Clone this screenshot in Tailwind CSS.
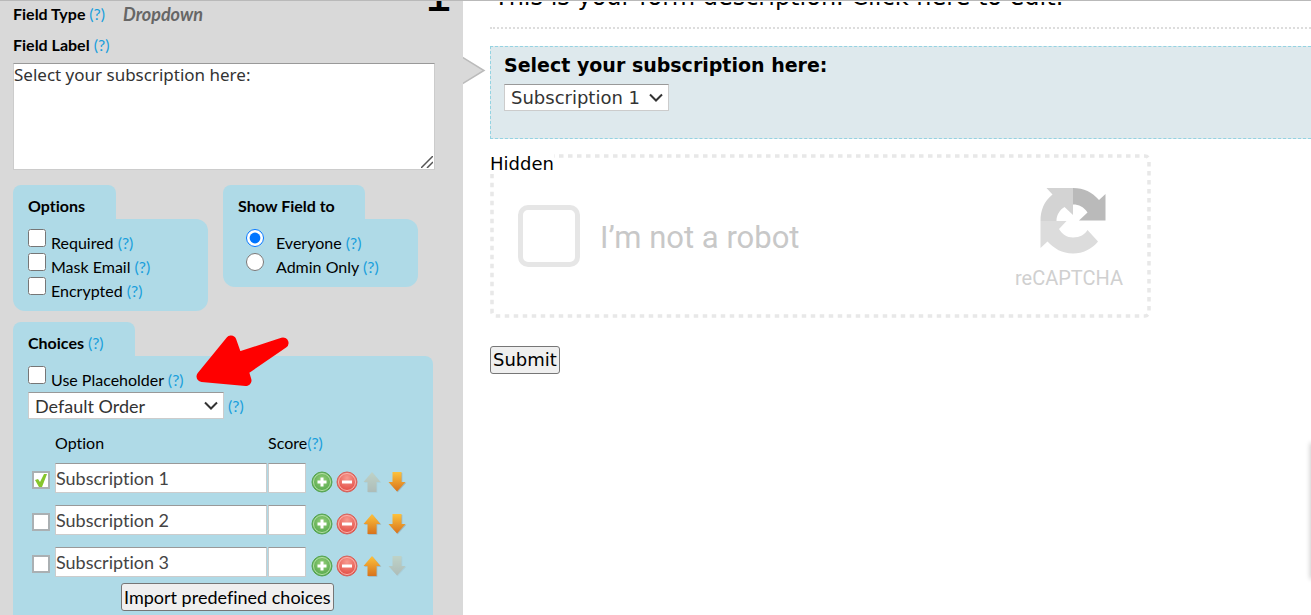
<!DOCTYPE html>
<html lang="en">
<head>
  <meta charset="UTF-8" />
  <meta name="viewport" content="width=device-width, initial-scale=1.0"/>
  <title>Form Editor</title>
  <script src="https://cdn.jsdelivr.net/npm/@tailwindcss/browser@4"></script>
</head>
<body class="bg-white text-black h-screen overflow-hidden flex border-t border-[#b9b9b9]">

  <!-- icons shared by the choice rows -->
  <svg class="absolute w-0 h-0" aria-hidden="true">
    <defs>
      <radialGradient id="green" cx=".5" cy=".4" r=".6"><stop offset="0" stop-color="#98d07c"/><stop offset="1" stop-color="#4fa548"/></radialGradient>
      <radialGradient id="red" cx=".5" cy=".3" r=".7"><stop offset="0" stop-color="#f79a90"/><stop offset="1" stop-color="#e2473f"/></radialGradient>
      <linearGradient id="orange" x1="0" y1="0" x2="0" y2="1"><stop offset="0" stop-color="#fdc23c"/><stop offset="1" stop-color="#d8731c"/></linearGradient>
      <symbol id="add" viewBox="0 0 22 22">
        <circle cx="11" cy="11" r="10" fill="url(#green)" stroke="#56a450"/>
        <circle cx="11" cy="11" r="8.5" fill="none" stroke="#b5dfa5"/>
        <path d="M11 6.500v9M6.500 11h9" stroke="#fff" stroke-width="3"/>
      </symbol>
      <symbol id="remove" viewBox="0 0 22 22">
        <circle cx="11" cy="11" r="10" fill="url(#red)" stroke="#d6635c"/>
        <circle cx="11" cy="11" r="8.5" fill="none" stroke="#f9b5ae"/>
        <path d="M6 11h10" stroke="#fff" stroke-width="3"/>
      </symbol>
      <symbol id="up" viewBox="0 0 22 22">
        <path d="M11 1l8.500 10h-4v10h-9V11h-4z" fill="#777" opacity=".35" transform="translate(.8 .8)"/>
        <path d="M11 1l8.500 10h-4v10h-9V11h-4z" fill="url(#orange)"/>
      </symbol>
      <symbol id="down" viewBox="0 0 22 22">
        <path d="M6.500 1h9v10h4L11 20.500 2.500 11h4z" fill="#777" opacity=".35" transform="translate(.8 .8)"/>
        <path d="M6.500 1h9v10h4L11 20.500 2.500 11h4z" fill="url(#orange)"/>
      </symbol>
    </defs>
  </svg>

  <aside class="relative w-[463px] shrink-0 bg-[#d9d9d9] px-[13px] font-[Lato,sans-serif] text-[16px] leading-6 [font-variant-ligatures:none]">
    <div class="absolute top-0 right-2 h-4 w-8 overflow-hidden flex items-end font-['DejaVu_Sans',sans-serif] text-[48px] leading-[46px]">1</div>

    <div class="flex pt-px">
      <p class="font-bold">Field Type <a href="#" class="font-normal text-[#1a9fdc]">(?)</a></p>
      <span class="ml-[18px] text-[18px] font-bold italic text-[#666]">Dropdown</span>
    </div>
    <div class="mt-[7px]">
      <label for="fieldLabel" class="font-bold">Field Label</label> <a href="#" class="text-[#1a9fdc]">(?)</a>
    </div>
    <div class="relative mt-[6px] w-[422px]">
      <textarea id="fieldLabel" class="block resize-none w-full h-[107px] bg-white border border-[#ccc] border-t-[#999] font-['Noto_Sans',sans-serif] text-[17px] leading-[22px] text-[#333]">Select your subscription here:</textarea>
      <svg class="absolute right-[2px] bottom-[2px] w-3 h-3 pointer-events-none" viewBox="0 0 12 12" stroke="#555" stroke-width="1.500"><path d="M0 12L12 0M6 12l6-6"/></svg>
    </div>

    <div class="flex items-start mt-[15px] gap-[15px]">
      <section class="w-[195px]">
        <h2 class="w-[103px] h-[34px] rounded-t-lg bg-[#afdae7] pl-[15px] pt-[9px] font-bold">Options</h2>
        <div class="h-[92px] rounded-b-xl rounded-tr-xl bg-[#afdae7] pl-[15px] pt-[10px]">
          <div class="flex h-6 gap-[5px]">
            <input type="checkbox" id="required" class="size-[18px]"/>
            <label for="required" class="mt-[2px]">Required <a href="#" class="text-[#1a9fdc]">(?)</a></label>
          </div>
          <div class="flex h-6 gap-[5px]">
            <input type="checkbox" id="mask" class="size-[18px]"/>
            <label for="mask" class="mt-[2px]">Mask Email <a href="#" class="text-[#1a9fdc]">(?)</a></label>
          </div>
          <div class="flex h-6 gap-[5px]">
            <input type="checkbox" id="encrypted" class="size-[18px]"/>
            <label for="encrypted" class="mt-[2px]">Encrypted <a href="#" class="text-[#1a9fdc]">(?)</a></label>
          </div>
        </div>
      </section>

      <section class="w-[195px]">
        <h2 class="w-[142px] h-[34px] rounded-t-lg bg-[#afdae7] pl-[15px] pt-[9px] font-bold">Show Field to</h2>
        <div class="h-[68px] rounded-b-xl rounded-tr-xl bg-[#afdae7] pl-[23px] pt-[10px]">
          <div class="flex h-6 gap-3">
            <input type="radio" name="show" id="everyone" checked class="size-[18px]"/>
            <label for="everyone" class="mt-[2px]">Everyone <a href="#" class="text-[#1a9fdc]">(?)</a></label>
          </div>
          <div class="flex h-6 gap-3">
            <input type="radio" name="show" id="admin" class="size-[18px]"/>
            <label for="admin" class="mt-[2px]">Admin Only <a href="#" class="text-[#1a9fdc]">(?)</a></label>
          </div>
        </div>
      </section>
    </div>

    <section class="mt-[11px] w-[420px]">
      <h2 class="w-[122px] h-[34px] rounded-t-lg bg-[#afdae7] pl-[15px] pt-[9px] font-bold">Choices <a href="#" class="font-normal text-[#1a9fdc]">(?)</a></h2>
      <div class="rounded-tr-lg bg-[#afdae7] px-[15px] pt-[10px] pb-8">
        <div class="flex h-[26px] gap-[5px]">
          <input type="checkbox" id="placeholder" class="size-[18px]"/>
          <label for="placeholder" class="mt-[2px]">Use Placeholder <a href="#" class="text-[#1a9fdc]">(?)</a></label>
        </div>
        <div class="flex items-center gap-1">
          <div class="relative">
            <select aria-label="Order" class="block appearance-none w-[196px] h-[27px] bg-white border border-[#ccc] border-t-[#999] pl-[6px] text-[18px] leading-6 text-[#333]">
              <option>Default Order</option>
            </select>
            <svg class="absolute right-[6px] top-[9px] w-[14px] h-[10px] pointer-events-none" viewBox="0 0 14 10" fill="none" stroke="#333" stroke-width="2"><path d="M1 1.500l6 6 6-6"/></svg>
          </div>
          <a href="#" class="text-[#1a9fdc]">(?)</a>
        </div>

        <div class="flex mt-3 pl-[27px]">
          <span class="w-[213px]">Option</span>
          <span>Score<a href="#" class="text-[#1a9fdc]">(?)</a></span>
        </div>
        <div id="choices" class="mt-2 flex flex-col gap-3"></div>
        <button type="button" class="block ml-[93px] mt-[6px] h-7 px-[2px] bg-[#efefef] border border-[#767676] rounded-[3px] text-[18px] leading-6">Import predefined choices</button>
      </div>
    </section>

    <svg class="absolute left-[195px] top-[333px] w-[96px] h-[54px] pointer-events-none" viewBox="0 0 96 54">
      <path d="M7 42.500L36 7l6 17 46-15-40 27.500 3 10z" fill="#f00" stroke="#f00" stroke-width="11" stroke-linejoin="round"/>
    </svg>
  </aside>

  <main class="relative flex-1 min-w-0 pl-[27px] font-['DejaVu_Sans',Verdana,sans-serif] text-[18px]">
    <div class="h-7 pt-px border-b-2 border-dotted border-[#ddd]">
      <p class="flex h-3 items-end overflow-hidden pl-1 text-[24px] leading-[34px] whitespace-nowrap">This is your form description. Click here to edit.</p>
    </div>

    <svg class="absolute left-0 top-[54px] w-[23px] h-[31px]" viewBox="0 0 23 31"><path d="M-1 2l22 13.500L-1 29" fill="#d9d9d9" stroke="#bbb" stroke-width="1.500"/></svg>

    <div class="mt-[17px] h-[93px] border border-r-0 border-dashed border-[#94d3e2] bg-[#dee9ed] pl-[13px] pt-[6px]">
      <label for="subscription" class="block text-[19px] leading-6 font-bold">Select your subscription here:</label>
      <div class="relative w-[165px] mt-[7px]">
        <select id="subscription" class="block appearance-none w-full h-[27px] bg-white border border-[#ccc] border-t-[#999] pl-[6px] text-[18px] leading-6 text-[#333]">
          <option>Subscription 1</option>
        </select>
        <svg class="absolute right-[6px] top-[9px] w-[14px] h-[10px] pointer-events-none" viewBox="0 0 14 10" fill="none" stroke="#333" stroke-width="2"><path d="M1 1.500l6 6 6-6"/></svg>
      </div>
    </div>

    <div class="relative mt-[15px] w-[661px] max-w-full h-[164px]">
      <svg class="absolute inset-0 w-full h-full" viewBox="0 0 661 164" fill="none"><rect x="2" y="2" width="657" height="160" rx="4" stroke="#e8e8e8" stroke-width="3.500" stroke-dasharray="4.500 4.500"/></svg>
      <span class="absolute left-0 top-0 leading-5 bg-white text-[18px]">Hidden</span>
      <div class="flex h-full items-center pl-7 pr-[28px]">
        <div class="size-[62px] border-[5px] border-[#e6e6e6] rounded-[10px]"></div>
        <span class="ml-5 mt-1 font-[Roboto,sans-serif] text-[31px] leading-9 text-[#c8c8c8]">I’m not a robot</span>
        <div class="ml-auto mt-[6px] flex flex-col items-center">
          <svg class="ml-2 w-[66px] h-[66px]" viewBox="0 0 66 66">
            <path d="M33 0H6.500l6 6.500C4 13.500.5 22 .5 33h16c0-6 3-11 8-14l8.500 8z" fill="#d3d3d3"/>
            <path d="M33 0c11 0 19 4 26 12l6.500-6v26.500H39l8.500-8C44 19 39 16.500 33 16.500z" fill="#bababa"/>
            <path d="M.5 33h26l-7.500 8c3 5 8 8.500 14 8.500 7 0 12-3 14.500-7.500L58 53.500C52 61 43 65.500 33 65.500c-11 0-19-5-25.500-12L.5 60z" fill="#dcdcdc"/>
          </svg>
          <span class="mt-3 font-[Roboto,sans-serif] text-[20px] leading-6 text-[#d0d0d0]">reCAPTCHA</span>
        </div>
      </div>
    </div>

    <button type="submit" class="block mt-7 h-7 px-[2px] bg-[#efefef] border border-[#767676] rounded-[3px] text-[18px] leading-6">Submit</button>

    <!-- edge of the side drawer -->
    <div class="absolute -right-1 top-[443px] w-1 h-[134px] shadow-[0_0_5px_1px_rgba(0,0,0,0.2)]"></div>
  </main>

  <script>
    const choices = ["Subscription 1", "Subscription 2", "Subscription 3"];

    document.getElementById("choices").innerHTML = choices.map((name, i) => `
      <div class="flex items-start h-[30px] pl-1">
        <span class="relative mt-2 mr-[5px] size-[18px]">
          <input type="checkbox" aria-label="Default ${name}" ${i === 0 ? "checked" : ""} class="block appearance-none size-[18px] bg-white border-2 border-[#aab0b3]"/>
          ${i === 0 ? `<svg class="absolute left-[3px] top-[3px] w-3 h-[14px] pointer-events-none" viewBox="0 0 12 14"><path d="M0 6l3-1 2 3 4-8h3L7 13H4z" fill="#86c52c"/></svg>` : ""}
        </span>
        <input type="text" aria-label="Option ${i + 1}" value="${name}" class="w-[212px] h-[30px] bg-white border border-[#ccc] border-t-[#999] text-[18px] leading-6 text-[#444]"/>
        <input type="text" aria-label="Score ${i + 1}" class="ml-px w-[38px] h-[30px] bg-white border border-[#ccc] border-t-[#999]"/>
        <div class="flex gap-[3px] ml-[5px] mt-2">
          <button type="button" aria-label="Add"><svg class="block size-[22px]"><use href="#add"/></svg></button>
          <button type="button" aria-label="Remove"><svg class="block size-[22px]"><use href="#remove"/></svg></button>
          <button type="button" aria-label="Move up" class="${i === 0 ? "opacity-30 grayscale-50" : ""}"><svg class="block size-[22px]"><use href="#up"/></svg></button>
          <button type="button" aria-label="Move down" class="${i === choices.length - 1 ? "opacity-30 grayscale-50" : ""}"><svg class="block size-[22px]"><use href="#down"/></svg></button>
        </div>
      </div>
    `).join("");
  </script>
</body>
</html>
